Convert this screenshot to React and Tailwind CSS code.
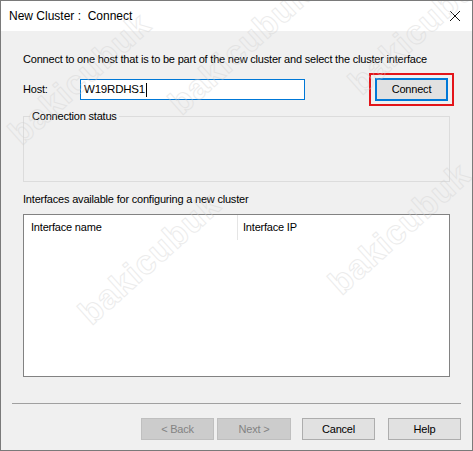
const marks = [
  { left: "left-[-10px]", top: "top-[70px]" },
  { left: "left-[150px]", top: "top-[40px]" },
  { left: "left-[330px]", top: "top-[20px]" },
  { left: "left-[60px]", top: "top-[250px]" },
  { left: "left-[310px]", top: "top-[220px]" },
];

function Watermarks() {
  return (
    <div className="pointer-events-none absolute inset-0 overflow-hidden">
      {marks.map((m, i) => (
        <span
          key={i}
          className={`absolute ${m.left} ${m.top} -rotate-[42deg] text-[34px] font-bold tracking-[1px] text-transparent opacity-40 [-webkit-text-stroke:1px_#d0d0d0] font-['Liberation_Sans',sans-serif]`}
        >
          bakicubuk
        </span>
      ))}
    </div>
  );
}

function Btn({ label, disabled, width = "w-[73px]" }) {
  return (
    <div
      className={`flex h-[22px] ${width} items-center justify-center border ${
        disabled ? "border-[#bfbfbf] bg-[#cccccc] text-[#838383]" : "border-[#adadad] bg-[#e1e1e1] text-black"
      }`}
    >
      {label}
    </div>
  );
}

export default function App() {
  return (
    <div className="relative h-[451px] w-[473px] overflow-hidden border border-[#7a7a7a] bg-[#f0f0f0] font-['Liberation_Sans',sans-serif] text-[11px] leading-[15px] tracking-[-0.2px] text-black">
      <div className="flex h-[30px] items-center justify-between bg-white pl-[8px] pr-[9px]">
        <span className="text-[12px] tracking-normal">New Cluster :&nbsp; Connect</span>
        <svg width="12" height="12" viewBox="0 0 12 12" className="mr-[2px]">
          <path d="M1 1 L11 11 M11 1 L1 11" stroke="#111" strokeWidth="1" />
        </svg>
      </div>

      <div className="flex flex-col px-[22px]">
        <p className="mt-[21px] whitespace-nowrap">Connect to one host that is to be part of the new cluster and select the cluster interface</p>

        <div className="mt-[6px] flex h-[33px] items-center">
          <span className="w-[57px]">Host:</span>
          <div className="flex h-[21px] w-[225px] items-center border border-[#0078d7] bg-white pl-[3px] text-[11.5px]">
            W19RDHS1<span className="ml-[1px] h-[14px] w-px bg-black" />
          </div>
          <div className="-mr-[4px] ml-auto flex h-[33px] w-[85px] items-center justify-center border-2 border-[#e3151a]">
            <div className="flex h-[23px] w-[73px] items-center justify-center border-2 border-[#0078d7] bg-[#e1e1e1]">
              Connect
            </div>
          </div>
        </div>

        <div className="relative mt-[10px] h-[66px] border border-[#dcdcdc]">
          <span className="absolute left-[6px] top-[-8px] bg-[#f0f0f0] px-[2px]">Connection status</span>
        </div>

        <p className="mt-[10px]">Interfaces available for configuring a new cluster</p>

        <div className="mt-[7px] h-[163px] border border-[#828282] bg-white">
          <div className="flex h-[25px] items-center">
            <div className="flex h-full w-[214px] items-center border-r border-[#e5e5e5] pl-[7px]">Interface name</div>
            <div className="pl-[5px]">Interface IP</div>
          </div>
        </div>

        <div className="-ml-[11px] -mr-[11px] mt-[26px] h-px bg-[#a0a0a0]" />

        <div className="-mr-[11px] mt-[14px] flex justify-end">
          <Btn label="< Back" disabled />
          <div className="ml-[3px]">
            <Btn label="Next >" disabled width="w-[74px]" />
          </div>
          <div className="ml-[11px]">
            <Btn label="Cancel" />
          </div>
          <div className="ml-[13px]">
            <Btn label="Help" />
          </div>
        </div>
      </div>

      <Watermarks />
    </div>
  );
}
